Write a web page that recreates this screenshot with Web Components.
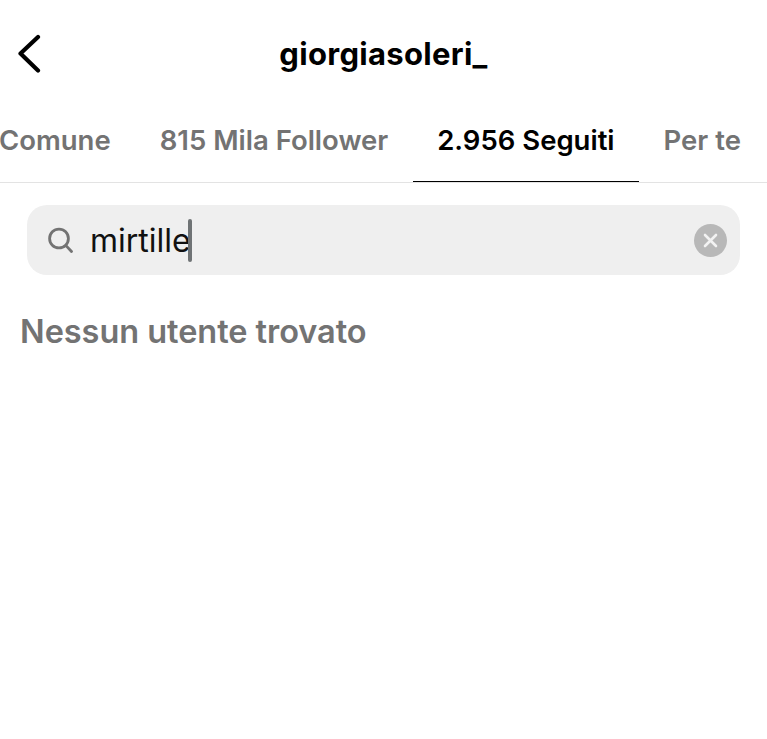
<!DOCTYPE html>
<html lang="it"><head><meta charset="utf-8"><title>giorgiasoleri_</title>
<style>html,body{margin:0;padding:0;background:#fff}body{width:767px;height:739px;overflow:hidden;font-family:Inter,"Liberation Sans",sans-serif}</style>
</head><body>
<ig-screen>
  <ig-header slot="header">giorgiasoleri_</ig-header>
  <ig-tabs slot="tabs">
    <ig-tab>Comune</ig-tab>
    <ig-tab>815 Mila Follower</ig-tab>
    <ig-tab active>2.956 Seguiti</ig-tab>
    <ig-tab>Per te</ig-tab>
  </ig-tabs>
  <ig-search slot="search">mirtille</ig-search>
  <ig-empty slot="empty">Nessun utente trovato</ig-empty>
</ig-screen>
<script>
function def(name, html){
  customElements.define(name, class extends HTMLElement{
    constructor(){super();this.attachShadow({mode:'open'}).innerHTML=html;}
  });
}
def('ig-screen',`<style>:host{display:flex;flex-direction:column;width:767px;height:739px;overflow:hidden;background:#fff}</style>
<slot name="header"></slot><slot name="tabs"></slot><slot name="search"></slot><slot name="empty"></slot>`);
def('ig-header',`<style>
:host{display:grid;grid-template-columns:1fr auto 1fr;align-items:center;height:105px;box-sizing:border-box;color:#000}
svg{display:block;margin-left:18px}
.t{font:700 31px/36px Inter,"Liberation Sans",sans-serif;letter-spacing:.3px;padding-top:2px}
</style>
<svg width="24" height="40" viewBox="0 0 24 40"><path d="M20 4 2.5 20.5 20 37.5" fill="none" stroke="#000" stroke-width="4.2" stroke-linecap="round" stroke-linejoin="round"/></svg>
<div class="t"><slot></slot></div><span></span>`);
def('ig-tabs',`<style>
:host{display:flex;height:78px;box-sizing:border-box;border-bottom:1px solid #e3e3e3;overflow:hidden}
.r{display:flex;margin-left:-25.5px;height:78px;flex:none}
</style><div class="r"><slot></slot></div>`);
def('ig-tab',`<style>
:host{display:flex;align-items:center;box-sizing:border-box;height:78px;padding:0 24.5px 7px;flex:none;color:#737373;font:600 27.5px/32px Inter,"Liberation Sans",sans-serif;border-bottom:2px solid transparent}
:host([active]){color:#000;border-bottom-color:#000}
</style><slot></slot>`);
def('ig-search',`<style>
:host{display:flex;align-items:center;box-sizing:border-box;width:713px;height:70px;margin:22px 0 0 27px;padding:0 13px 0 21px;border-radius:20px;background:#efefef;color:#111;font:400 32px/40px Inter,"Liberation Sans",sans-serif}
.ic{flex:none;display:block}
.txt{margin-left:17px;flex:1;display:flex;align-items:center}
.label{padding-top:2px}
.caret{display:block;width:4px;height:43px;border-radius:2px;background:#6f7375;margin-left:-3px;flex:none}
.x{flex:none;display:block}
</style>
<svg class="ic" width="25" height="26" viewBox="0 0 25 26"><circle cx="11" cy="11.5" r="9.4" fill="none" stroke="#737373" stroke-width="2.8"/><path d="M18 18.6 23.5 24.5" stroke="#737373" stroke-width="2.8" stroke-linecap="round"/></svg>
<div class="txt"><span class="label"><slot></slot></span><i class="caret"></i></div>
<svg class="x" width="33" height="33" viewBox="0 0 33 33"><circle cx="16.5" cy="16.5" r="16.5" fill="#b8b8b8"/><path d="M11 11 22 22M22 11 11 22" stroke="#f2f2f2" stroke-width="2.6" stroke-linecap="round"/></svg>`);
def('ig-empty',`<style>
:host{display:block;margin:37px 0 0 20px;color:#737373;font:600 32.5px/40px Inter,"Liberation Sans",sans-serif;letter-spacing:-.05px}
</style><slot></slot>`);
</script>
</body></html>
